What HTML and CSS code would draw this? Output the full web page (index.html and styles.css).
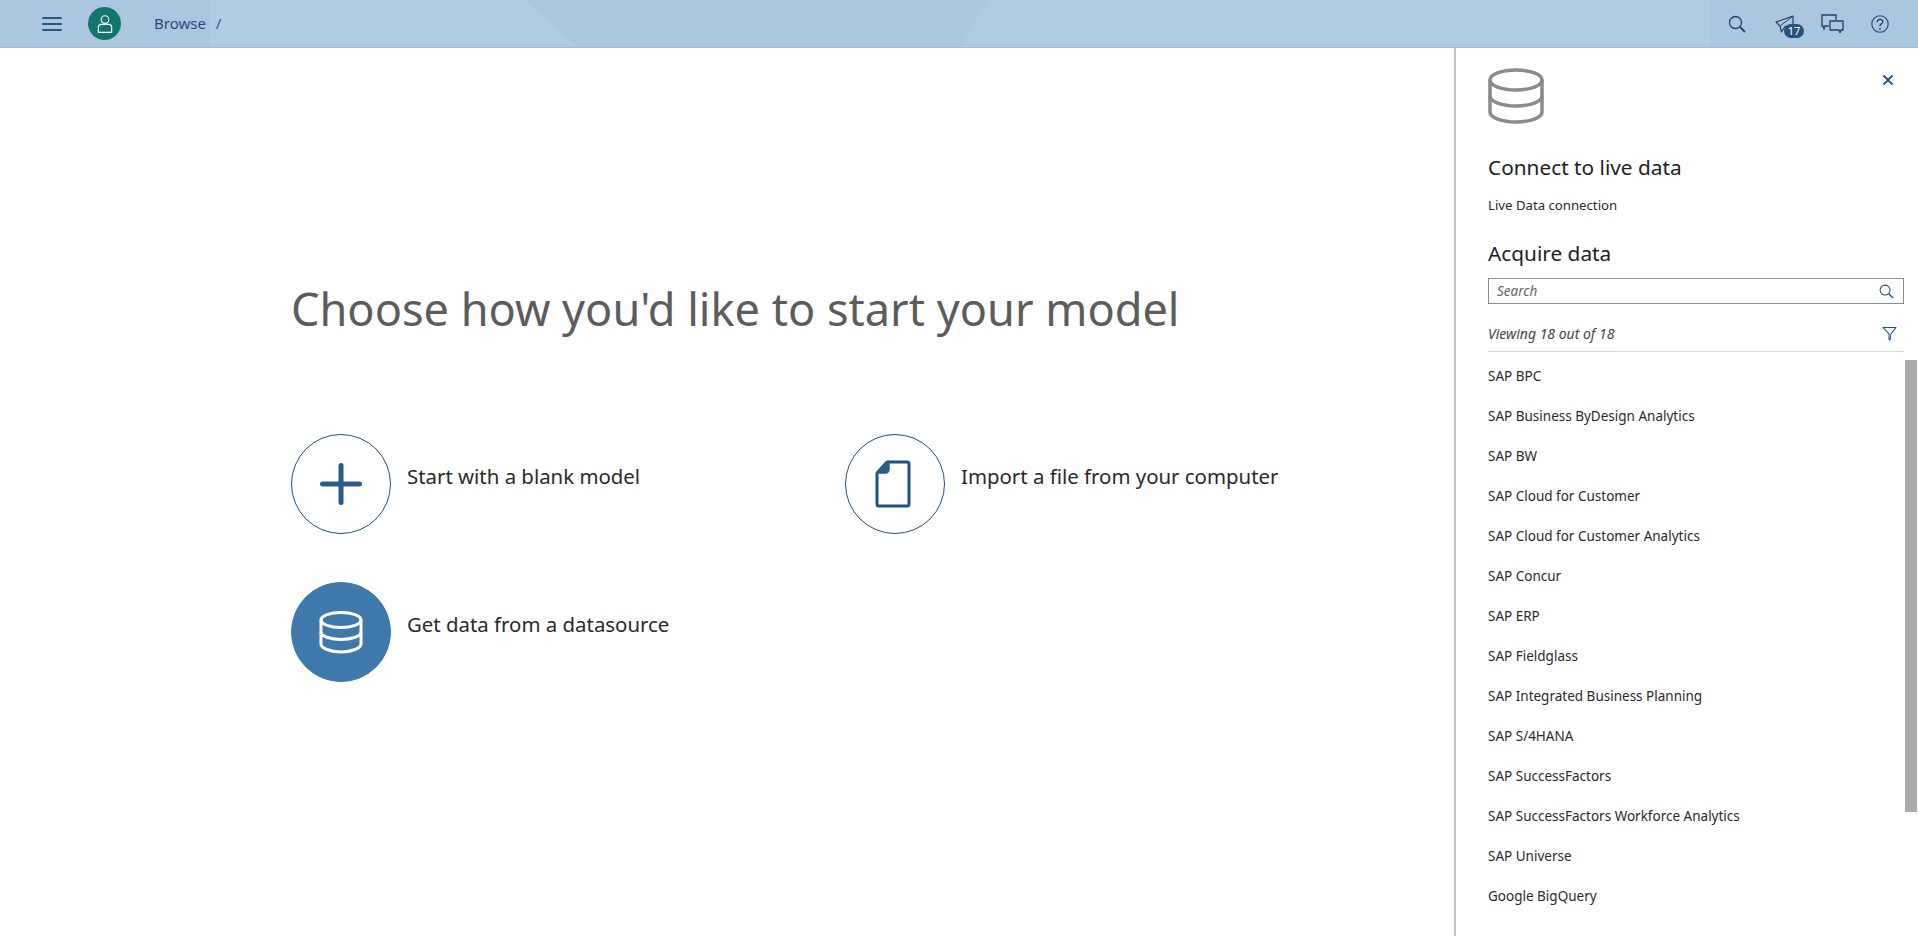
FILE: index.html
```html
<!DOCTYPE html>
<html lang="en">
<head>
<meta charset="utf-8">
<title>Choose how you'd like to start your model</title>
<link rel="stylesheet" href="styles.css">
</head>
<body>
<header class="shell">
  <svg class="shell-bg" viewBox="0 0 1918 47" preserveAspectRatio="none" aria-hidden="true">
    <polygon points="210,0 525,0 578,47 210,47" fill="#b0cbe3"/>
    <polygon points="988,0 1710,0 1710,47 960,47" fill="#b0cbe3"/>
  </svg>
  <div class="shell-left">
    <svg class="ico menu" viewBox="0 0 20 16"><path d="M1 2h18M1 8h18M1 14h18" stroke="#27537e" stroke-width="2" fill="none" stroke-linecap="round"/></svg>
    <span class="avatar">
      <svg viewBox="0 0 18 22" width="16" height="20"><circle cx="9" cy="6" r="4.3" fill="none" stroke="#fff" stroke-width="1.3"/><path d="M1.5 20.500v-5.500q0-3.500 3.500-3.500h8q3.500 0 3.500 3.500v5.500z" fill="none" stroke="#fff" stroke-width="1.3"/></svg>
    </span>
    <nav class="crumbs"><a>Browse</a><span class="sep">/</span></nav>
  </div>
  <div class="shell-right">
    <svg class="ico" viewBox="0 0 18 18" width="18" height="18"><circle cx="7.500" cy="7.500" r="6" fill="none" stroke="#1d4370" stroke-width="1.300"/><path d="M12 12l5 5" stroke="#1d4370" stroke-width="1.800"/></svg>
    <span class="notif">
      <svg viewBox="0 0 20 18" width="20" height="18"><path d="M1 7l17-6v13L10 11.500 6.500 17 5 11z" fill="none" stroke="#1d4370" stroke-width="1.200" stroke-linejoin="round"/><path d="M5 11L18 1" fill="none" stroke="#1d4370" stroke-width="1"/></svg>
      <b class="badge">17</b>
    </span>
    <svg class="ico chat" viewBox="0 0 23 19" width="23" height="19"><path d="M8 12H4l-1 3-1-3H1V1h14v5" fill="none" stroke="#1d4370" stroke-width="1.300"/><path d="M9 7h13v9h-2l-1 3-1-3H9z" fill="none" stroke="#1d4370" stroke-width="1.300"/></svg>
    <svg class="ico help" viewBox="0 0 18 18" width="18" height="18"><circle cx="9" cy="9" r="8.200" fill="none" stroke="#1d4370" stroke-width="1.100"/><path d="M6.300 7q0-2.700 2.800-2.700 2.700 0 2.700 2.400 0 1.400-1.500 2.200-1.300.7-1.300 2.100" fill="none" stroke="#1d4370" stroke-width="1.300"/><circle cx="9" cy="14" r=".9" fill="#1d4370"/></svg>
  </div>
</header>
<div class="body">
  <main class="main">
    <h1 class="title">Choose how you'd like to start your model</h1>
    <div class="options">
      <div class="option">
        <span class="circle">
          <svg viewBox="0 0 42 42" width="42" height="42"><path d="M21 2.500v37M2.500 21h37" stroke="#2b5c88" stroke-width="5" stroke-linecap="round" fill="none"/></svg>
        </span>
        <span class="option-label">Start with a blank model</span>
      </div>
      <div class="option">
        <span class="circle">
          <svg class="file" viewBox="0 0 36 48" width="36" height="48"><path d="M12 2h20q2 0 2 2v40q0 2-2 2H4q-2 0-2-2V13z" fill="none" stroke="#1f5384" stroke-width="3" stroke-linejoin="round"/><path d="M12 2q2 0 2 2v5q0 4-4 4H2z" fill="#2b5c88" stroke="#2b5c88" stroke-width="1.500" stroke-linejoin="round"/></svg>
        </span>
        <span class="option-label">Import a file from your computer</span>
      </div>
      <div class="option">
        <span class="circle filled">
          <svg viewBox="0 0 44 44" width="44" height="44"><g fill="none" stroke="#fff" stroke-width="3"><ellipse cx="22" cy="10" rx="20" ry="7.500"/><path d="M2 10v24c0 4 9 8 20 8s20-4 20-8V10"/><path d="M2 22c0 4 9 7.500 20 7.500S42 26 42 22"/></g></svg>
        </span>
        <span class="option-label">Get data from a datasource</span>
      </div>
    </div>
  </main>
  <aside class="panel">
    <svg class="panel-db" viewBox="0 0 56 56" width="56" height="56"><g fill="none" stroke="#8a8a8a" stroke-width="3.500"><ellipse cx="28" cy="12" rx="26" ry="10"/><path d="M2 12v32c0 5.500 12 10 26 10s26-4.500 26-10V12"/><path d="M2 28c0 5.500 12 10 26 10s26-4.500 26-10"/></g></svg>
    <svg class="panel-close" viewBox="0 0 12 12" width="12" height="12"><path d="M1.500 1.500l9 9M10.500 1.500l-9 9" stroke="#1f5384" stroke-width="1.800"/></svg>
    <h2 class="panel-h first">Connect to live data</h2>
    <div class="live">Live Data connection</div>
    <h2 class="panel-h second">Acquire data</h2>
    <div class="search">
      <span class="search-ph">Search</span>
      <svg viewBox="0 0 16 16" width="15" height="15"><circle cx="6.500" cy="6.500" r="5.300" fill="none" stroke="#1f5384" stroke-width="1.100"/><path d="M10.500 10.500l4.500 4.500" stroke="#1f5384" stroke-width="1.500"/></svg>
    </div>
    <div class="count">
      <span>Viewing 18 out of 18</span>
      <svg viewBox="0 0 16 16" width="15" height="15"><path d="M1 1.500h14L9.500 8.500l-1 6.500-1-1V8.500z" fill="none" stroke="#1f5384" stroke-width="1.100" stroke-linejoin="round"/></svg>
    </div>
    <ul class="sources">
      <li>SAP BPC</li>
      <li>SAP Business ByDesign Analytics</li>
      <li>SAP BW</li>
      <li>SAP Cloud for Customer</li>
      <li>SAP Cloud for Customer Analytics</li>
      <li>SAP Concur</li>
      <li>SAP ERP</li>
      <li>SAP Fieldglass</li>
      <li>SAP Integrated Business Planning</li>
      <li>SAP S/4HANA</li>
      <li>SAP SuccessFactors</li>
      <li>SAP SuccessFactors Workforce Analytics</li>
      <li>SAP Universe</li>
      <li>Google BigQuery</li>
    </ul>
    <div class="scrollbar"></div>
  </aside>
</div>
</body>
</html>
```
FILE: styles.css
```css
* { box-sizing: border-box; }
html, body { margin: 0; height: 100%; overflow: hidden; background: #fff; }
body { font-family: "Noto Sans", "Open Sans", sans-serif; color: #1a1a1a; }

.shell {
  position: relative;
  height: 48px;
  background: #abc7df;
  border-bottom: 1px solid #9fbcd6;
  display: flex;
  justify-content: space-between;
  align-items: center;
  padding: 0 29px 0 42px;
}
.shell-bg { position: absolute; left: 0; top: 0; width: 100%; height: 47px; }
.shell-left, .shell-right { position: relative; display: flex; align-items: center; }
.menu { width: 20px; height: 16px; margin-right: 26px; }
.avatar {
  width: 33px; height: 33px; border-radius: 50%;
  background: #12766f;
  display: flex; align-items: center; justify-content: center;
  margin-right: 33px;
}
.crumbs { font-size: 15px; line-height: 20px; margin-top: -2px; color: #1f4a7a; display: flex; gap: 10px; }
.sep { color: #3d4f68; }
.shell-right { gap: 25px; }
.notif { position: relative; display: flex; margin-left: 4px; }
.chat { margin-left: 1px; }
.help { margin-left: 2px; }
.badge {
  position: absolute; left: 9px; top: 9px;
  width: 20px; height: 14px; border-radius: 7px;
  background: #25527e; color: #fff;
  font: 400 11px/14px "Noto Sans", sans-serif; text-align: center;
}

.body { display: flex; height: 888px; }
.main { flex: 1; padding: 0 0 0 291px; }
.title {
  margin: 0; padding-top: 233px;
  font-size: 45.100px; line-height: 56px; font-weight: 400; color: #5c5c5c;
}
.options {
  display: grid;
  grid-template-columns: 554px 1fr;
  row-gap: 48px;
  margin-top: 97px;
}
.option { display: flex; height: 100px; gap: 16px; }
.option-label { font-size: 20.400px; line-height: 28px; padding-top: 28px; color: #2a2a2a; }
.circle {
  width: 100px; height: 100px; flex: none; border-radius: 50%;
  border: 1px solid #1f4f85;
  display: flex; align-items: center; justify-content: center;
}
.circle.filled { background: #3f78aa; border-color: #3f78aa; }
.file { margin-right: 5px; }

.panel {
  position: relative;
  width: 464px;
  border-left: 2px solid #c2c2c2;
  padding: 0 14px 0 32px;
  overflow: hidden;
}
.panel-db { display: block; margin-top: 20px; }
.panel-close { position: absolute; right: 24px; top: 26px; }
.panel-h { margin: 0; font-weight: 400; font-size: 20.800px; line-height: 28px; color: #222; }
.panel-h.first { margin-top: 29px; }
.panel-h.second { margin-top: 24px; }
.live { font-size: 13.200px; line-height: 20px; margin-top: 14px; color: #2a2a2a; }
.search {
  margin-top: 11px; height: 26px;
  border: 1px solid #8c8c8c;
  display: flex; align-items: center; justify-content: space-between;
  padding: 0 9px 0 8px;
}
.search-ph { font-size: 13.500px; font-style: italic; color: #666; }
.count {
  height: 48px; padding: 11px 7px 0 0;
  border-bottom: 1px solid #d9d9d9;
  display: flex; align-items: center; justify-content: space-between;
  font-size: 14px; font-style: italic; color: #444;
}
.sources { list-style: none; margin: 4px 0 0; padding: 0; }
.sources li { height: 40px; line-height: 40px; font-size: 13.500px; color: #2a2a2a; white-space: nowrap; }
.scrollbar {
  position: absolute; right: 1px; top: 312px;
  width: 12px; height: 452px; background: #ababab;
}
```
